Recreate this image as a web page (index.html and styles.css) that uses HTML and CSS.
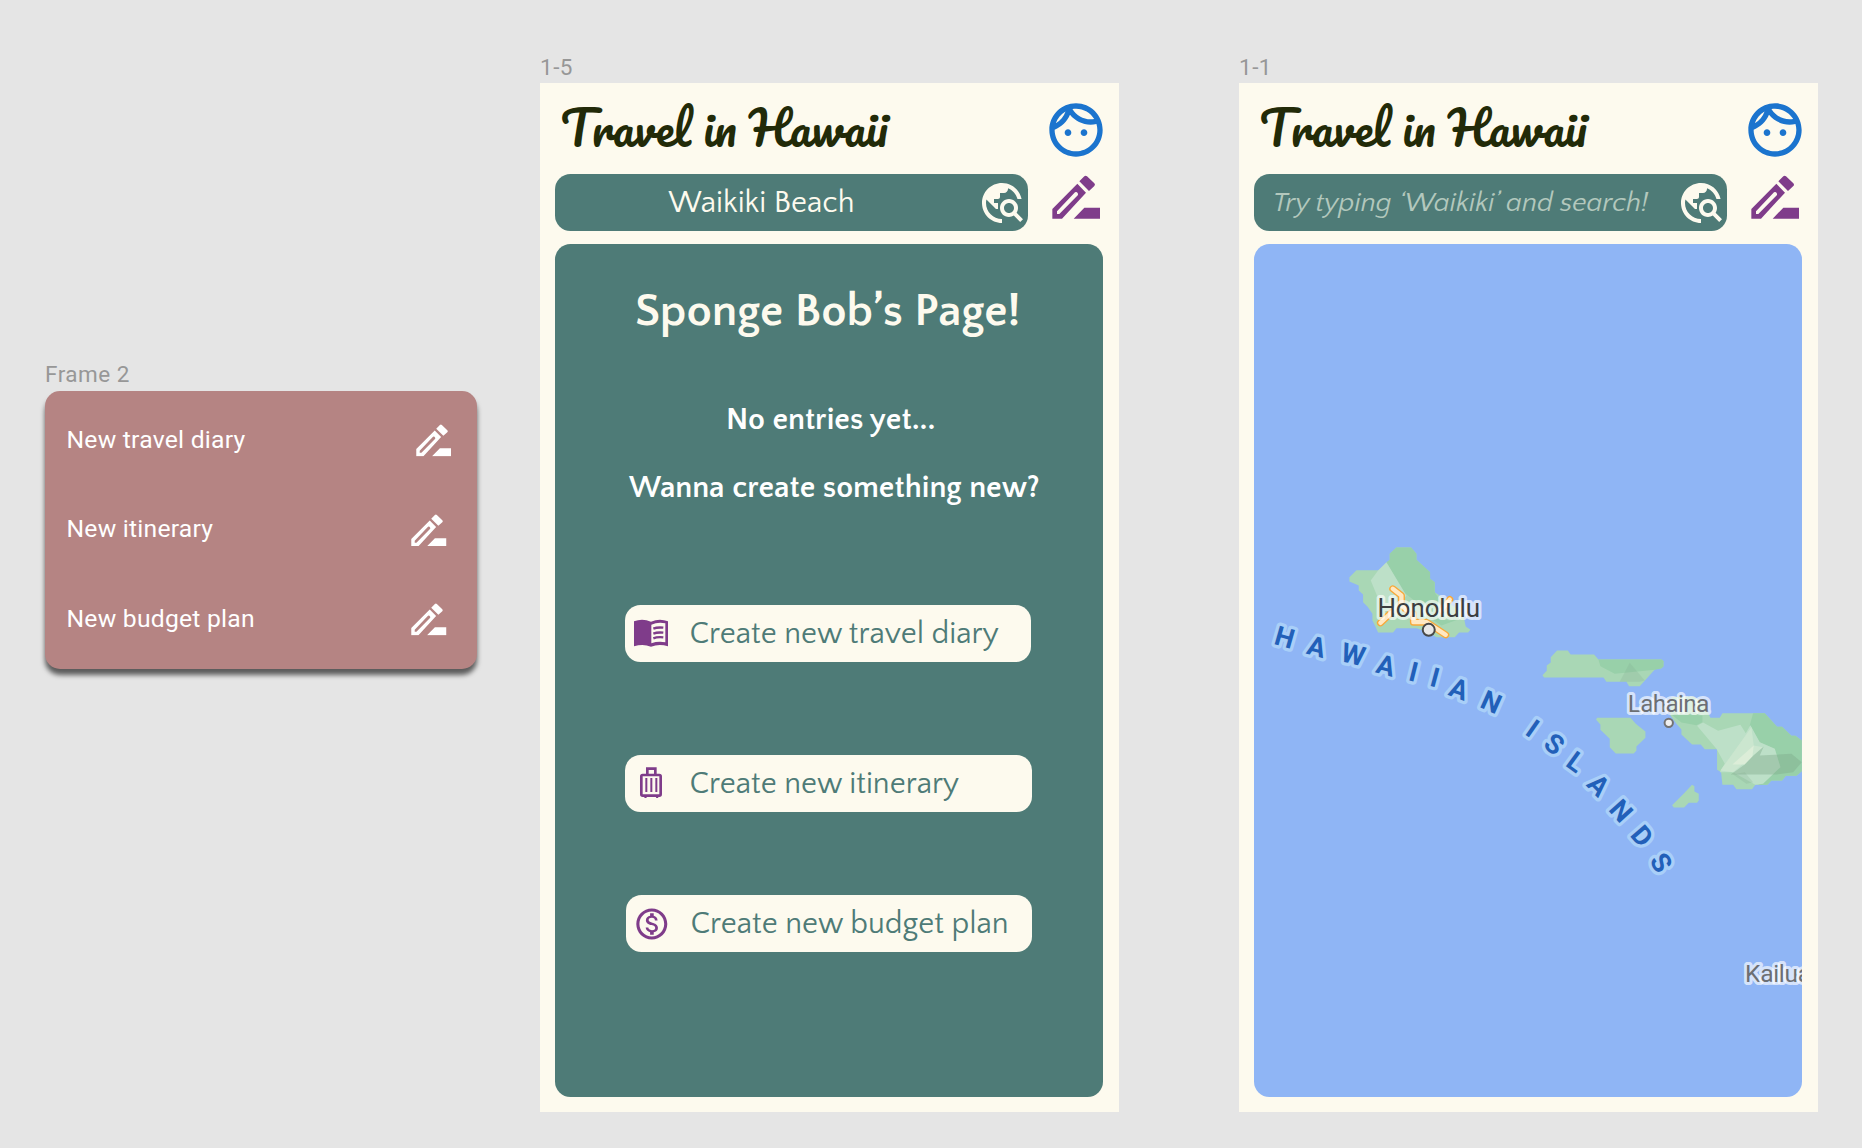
FILE: index.html
```html
<!DOCTYPE html>
<html lang="en">
<head>
<meta charset="utf-8">
<title>Travel in Hawaii</title>
<link rel="stylesheet" href="styles.css">
</head>
<body>
<svg class="defs" aria-hidden="true">
  <symbol id="pencil" viewBox="21 28 144 132">
    <path fill-rule="evenodd" d="M22 159V130L97 54L123 81L51 159ZM36 145H43L99 88Q100 84 96 80Q93 78 90 80L36 137Z"/>
    <path d="M103 47L118 32Q122 28 126 32L148 53Q152 57 148 61L132 76ZM86 159L118 126H165V159Z"/>
  </symbol>
  <symbol id="face" viewBox="0 0 24 24">
    <path d="M10.25 13c0 .69-.56 1.25-1.25 1.25S7.75 13.69 7.75 13s.56-1.25 1.25-1.25 1.25.56 1.25 1.25zM15 11.75c-.69 0-1.25.56-1.25 1.25s.56 1.25 1.25 1.25 1.25-.56 1.25-1.25-.56-1.25-1.25-1.25zM22 12c0 5.52-4.48 10-10 10S2 17.52 2 12 6.48 2 12 2s10 4.48 10 10zM10.66 4.12C12.06 6.44 14.6 8 17.5 8c.46 0 .91-.05 1.34-.12C17.44 5.56 14.9 4 12 4c-.46 0-.91.05-1.34.12zM4.42 9.47c1.71-.97 3.03-2.55 3.66-4.44C6.37 6 5.05 7.58 4.42 9.47zM20 12c0-.78-.12-1.53-.33-2.24-.7.15-1.42.24-2.17.24-3.13 0-5.92-1.44-7.76-3.69C8.69 8.87 6.6 10.88 4 11.86c.01.04 0 .09 0 .14 0 4.41 3.59 8 8 8s8-3.59 8-8z"/>
  </symbol>
  <symbol id="explore" viewBox="0 0 24 24">
    <path d="M19.3 16.9c.4-.7.7-1.5.7-2.4 0-2.5-2-4.5-4.5-4.5S11 12 11 14.5s2 4.5 4.500 4.500c.9 0 1.700-.3 2.400-.7l3.200 3.200 1.400-1.400-3.200-3.200zM15.500 17c-1.400 0-2.500-1.100-2.500-2.500s1.100-2.500 2.500-2.500 2.500 1.100 2.500 2.500-1.100 2.500-2.500 2.500zM12 20v2C6.480 22 2 17.520 2 12S6.480 2 12 2c4.840 0 8.870 3.440 9.800 8h-2.070c-.64-2.460-2.400-4.470-4.730-5.410V5c0 1.100-.9 2-2 2h-2v2c0 .55-.45 1-1 1H8v2h2v3H9l-4.790-4.790C4.080 10.790 4 11.380 4 12c0 4.410 3.590 8 8 8z"/>
  </symbol>
</svg>
<main class="canvas">
  <section class="frame frame-menu">
    <h2 class="frame-label">Frame 2</h2>
    <ul class="menu">
      <li class="menu-item first"><span>New travel diary</span><svg class="menu-icon"><use href="#pencil"/></svg></li>
      <li class="menu-item"><span>New itinerary</span><svg class="menu-icon"><use href="#pencil"/></svg></li>
      <li class="menu-item"><span>New budget plan</span><svg class="menu-icon"><use href="#pencil"/></svg></li>
    </ul>
  </section>

  <section class="frame frame-profile">
    <h2 class="frame-label">1-5</h2>
    <div class="phone">
      <header class="top"><h1 class="brand">Travel in Hawaii</h1><svg class="face"><use href="#face"/></svg></header>
      <div class="search-row">
        <div class="search"><span class="query">Waikiki Beach</span><svg class="explore"><use href="#explore"/></svg></div>
        <svg class="edit"><use href="#pencil"/></svg>
      </div>
      <div class="panel">
        <h3 class="page-title">Sponge Bob’s Page!</h3>
        <p class="note note-empty">No entries yet...</p>
        <p class="note note-ask">Wanna create something new?</p>
        <button class="create create-diary">
          <svg class="create-icon" viewBox="625 605 40 56">
            <g transform="translate(625 605) scale(.3333)">
              <path fill-rule="evenodd" d="M27 46Q52 36 78 47Q104 36 129 46V121Q103 112 78 122Q54 112 27 121ZM79 56V112Q99 105 121 109V52Q99 47 79 56Z"/>
              <path class="book-lines" d="M85 68Q97 63 115 65M85 83Q97 78 115 80M85 97Q97 92 115 94"/>
            </g>
          </svg>
          <span>Create new travel diary</span>
        </button>
        <button class="create create-itinerary">
          <svg class="create-icon" viewBox="625 755 40 56">
            <g transform="translate(625 755) scale(.3333)">
              <rect class="case" x="49" y="57" width="58" height="62" rx="4"/>
              <path class="case" d="M67 57V38H91V57"/>
              <path class="case ribs" d="M64 66V108M79 66V108M94 66V108"/>
              <path d="M56 120H67L64 126H59ZM91 120H102L99 126H94Z"/>
            </g>
          </svg>
          <span>Create new itinerary</span>
        </button>
        <button class="create create-budget">
          <svg class="create-icon" viewBox="0 0 40 56">
            <path transform="translate(7.2 9.4) scale(1.55)" d="M12 2C6.480 2 2 6.480 2 12s4.480 10 10 10 10-4.480 10-10S17.520 2 12 2zm0 18c-4.410 0-8-3.590-8-8s3.590-8 8-8 8 3.590 8 8-3.590 8-8 8zm.31-8.860c-1.770-.45-2.340-.94-2.340-1.670 0-.84.79-1.430 2.100-1.430 1.380 0 1.900.66 1.940 1.640h1.710c-.05-1.340-.87-2.570-2.490-2.970V5H10.900v1.690c-1.510.32-2.720 1.300-2.720 2.810 0 1.790 1.490 2.690 3.660 3.210 1.950.46 2.340 1.150 2.340 1.870 0 .53-.39 1.390-2.100 1.390-1.600 0-2.230-.72-2.320-1.640H8.040c.1 1.700 1.360 2.660 2.860 2.970V19h2.340v-1.670c1.520-.29 2.720-1.160 2.730-2.770-.01-2.200-1.900-2.960-3.660-3.420z"/>
          </svg>
          <span>Create new budget plan</span>
        </button>
      </div>
    </div>
  </section>

  <section class="frame frame-map">
    <h2 class="frame-label">1-1</h2>
    <div class="phone">
      <header class="top"><h1 class="brand">Travel in Hawaii</h1><svg class="face"><use href="#face"/></svg></header>
      <div class="search-row">
        <div class="search"><span class="hint">Try typing ‘Waikiki’ and search!</span><svg class="explore"><use href="#explore"/></svg></div>
        <svg class="edit"><use href="#pencil"/></svg>
      </div>
      <svg class="map" viewBox="1254.500 243.500 547.500 853">
        <g transform="translate(1250 530) scale(.33333)">
          <path class="land" d="M440 51H484L500 70V88L541 125V145L555 155V185L570 195L640 250L648 288L662 298L655 306H628L615 320H560L535 305L500 293H440L430 306H385L378 290L368 270V250L353 228L340 215V192L327 180V165L299 153V140L320 119H388L420 88V70Z"/>
          <path class="forest" d="M440 51H484L500 70V88L541 125V145L555 155V185L590 240L520 230L462 185L410 95L420 88V70Z"/>
          <path class="upland" d="M410 95L470 195L440 240L390 215L363 150L385 120Z"/>
          <path class="forest" d="M540 262L600 270L640 262L575 285Z"/>
          <path class="road-edge" d="M429 175L455 195V225L470 238M392 277L425 246M491 250V275H530L588 313M575 240L600 207"/>
          <path class="road" d="M429 175L455 195V225L470 238M392 277L425 246M491 250V275H530L588 313M575 240L600 207"/>
          <text class="town town-major" x="383" y="259" textLength="308">Honolulu</text>
          <circle class="town-dot" cx="537" cy="298" r="18"/>
          <g class="sea-name">
            <text transform="translate(105 320) rotate(16)" y="29">H</text>
            <text transform="translate(201 348) rotate(15)" y="29">A</text>
            <text transform="translate(311 371) rotate(14)" y="29">W</text>
            <text transform="translate(409 404) rotate(15)" y="29">A</text>
            <text transform="translate(492 423) rotate(14)" y="29">I</text>
            <text transform="translate(556 440) rotate(15)" y="29">I</text>
            <text transform="translate(628 475) rotate(20)" y="29">A</text>
            <text transform="translate(725 514) rotate(24)" y="29">N</text>
          </g>
        </g>
        <g transform="translate(1500 630) scale(.33333)">
          <path class="land" d="M172 60H204L213 72H283L296 87H486L491 92V108L484 114H468L420 167H388L380 154H320L311 141H133L128 134L141 121V105L153 96V80Z"/>
          <path class="forest" d="M296 87H486L491 92V108L484 114L466 118L345 130L302 107Z"/>
          <path class="ridge" d="M390 97L435 150L420 154H360Z"/>
          <path class="land" d="M292 262H392L408 280L437 303V322L410 348V360L402 369H348L330 350V325L302 298V282L289 268Z"/>
          <path class="land" d="M577 463L584 467V483L597 490V510L592 517H567L553 531H522L517 524L553 488Z"/>
          <path class="land" d="M515 200L580 198L610 215L632 262H660L668 248H795L832 289H847L875 316H887L906 330V422L890 436H858L847 450H815L803 463H767L757 476H710L700 463H668L664 425L652 418V356H615L603 342H577L545 312V297L530 280L512 255Z"/>
          <path class="forest" d="M512 250L608 255V275L590 284L545 276ZM760 248H795L832 289H847L875 316H887L906 330V422L890 436H858L847 450H815L803 463H775L842 410L825 355L780 335L750 285Z"/>
          <path class="upland" d="M592 286L610 276L655 301L722 283L738 308L752 284L780 335L825 355L842 410L790 460L767 463L700 425H660L675 400L650 355Z"/>
          <path class="peak" d="M755 290L762 345L790 350L700 425L662 420Z"/>
          <path class="summit" d="M762 345L758 378L735 402H698Z"/>
          <path class="ridge rock" d="M792 348L780 375L875 370L906 395L880 425L830 432H693L735 402L758 378Z"/>
          <path class="ridge" d="M735 425L760 455L740 460L700 432Z"/>
          <text class="town" x="384" y="244" textLength="245">Lahaina</text>
          <circle class="town-dot minor" cx="507" cy="277" r="12.500"/>
          <g class="sea-name">
            <text transform="translate(99 293) rotate(35)" y="29">I</text>
            <text transform="translate(164 340) rotate(37)" y="29">S</text>
            <text transform="translate(229 394) rotate(36)" y="29">L</text>
            <text transform="translate(297 464) rotate(46)" y="29">A</text>
            <text transform="translate(365 540) rotate(48)" y="29">N</text>
          </g>
        </g>
        <g transform="translate(1480 700) scale(.33333)">
          <g class="sea-name">
            <text transform="translate(488 406) rotate(49)" y="29">D</text>
            <text transform="translate(545 486) rotate(58)" y="29">S</text>
          </g>
          <text class="town" x="796" y="844" textLength="198">Kailua</text>
        </g>
      </svg>
    </div>
  </section>
</main>
</body>
</html>
```
FILE: styles.css
```css
* { box-sizing: border-box; margin: 0; padding: 0; }

body {
  background: #e5e5e5;
  width: 1862px;
  height: 1148px;
  overflow: hidden;
  font-family: "Quattrocento Sans", Lato, sans-serif;
}

.defs { display: none; }

.canvas { display: flex; align-items: flex-start; padding-left: 45px; }

.frame-label {
  font: 400 22.5px/32px Roboto, sans-serif;
  letter-spacing: .5px;
  color: #979797;
  height: 32px;
  white-space: nowrap;
}

/* Pop-up menu frame */
.frame-menu { width: 432px; margin-top: 358px; }
.menu {
  list-style: none;
  height: 278px;
  margin-top: .5px;
  padding: 4px 30.500px 0 21.500px;
  border-radius: 15px;
  background: #b58483;
  box-shadow: 0 6px 5px rgba(0, 0, 0, .6);
}
.menu-item {
  display: flex;
  justify-content: space-between;
  align-items: center;
  height: 89.500px;
  color: #fff;
  font: 400 24.700px/30px Roboto, sans-serif;
  letter-spacing: .23px;
}
.menu-item.first { margin-right: -4.500px; }
.menu-item span { margin-top: .5px; }
.menu-icon { width: 35.500px; height: 32.500px; fill: #fff; margin-top: 2px; }

/* Phone frames */
.frame-profile { margin: 51px 0 0 63px; }
.frame-map { margin: 51px 0 0 120.500px; }
.phone {
  width: 578.500px;
  height: 1029px;
  padding: 0 15px;
  background: #fdfaee;
}
.top { display: flex; justify-content: space-between; height: 91px; padding: 0 .5px 0 5.500px; }
.brand {
  font: 400 46.300px/90px Pacifico, cursive;
  color: #222a08;
  white-space: nowrap;
}
.face { width: 64px; height: 64px; margin: 15px -5px 0 0; fill: #1b74ce; }

.search-row { display: flex; height: 57px; gap: 24.500px; }
.search {
  display: flex;
  justify-content: space-between;
  width: 472.500px;
  height: 57px;
  padding: 0 1.500px 0 19px;
  border-radius: 15.500px;
  background: #4e7b77;
}
.query { margin-left: 94.500px; font-size: 30.860px; line-height: 58px; color: #fdfaee; white-space: nowrap; }
.hint { font-size: 27.770px; font-style: italic; line-height: 58px; color: #b3c8bd; white-space: nowrap; }
.explore { width: 48px; height: 48px; margin-top: 4.500px; fill: #fdfaee; }
.edit { width: 48px; height: 44px; margin-top: 1px; fill: #7f3c8a; }

.panel, .map { width: 548px; height: 853px; margin-top: 12.500px; border-radius: 15.500px; }
.panel { padding: 39.500px 0 0 70px; background: #4e7b77; white-space: nowrap; }
.page-title { margin-left: 10px; font-size: 46.300px; font-weight: 700; line-height: 58px; color: #fdfaee; }
.note { font-size: 30.860px; font-weight: 700; line-height: 40px; color: #fff; }
.note-empty { margin: 59px 0 0 101px; }
.note-ask { margin: 28px 0 0 4px; }

.create {
  display: flex;
  align-items: center;
  width: 406px;
  height: 57px;
  border: 0;
  border-radius: 15.500px;
  background: #fdfaee;
  color: #4e7b77;
  font: 400 30.860px/52px "Quattrocento Sans", Lato, sans-serif;
  white-space: nowrap;
}
.create-diary { margin-top: 97px; }
.create-itinerary { width: 407px; margin-top: 93px; }
.create-budget { margin: 83px 0 0 1px; }
.create-icon { width: 40px; height: 56px; margin-right: 24.500px; overflow: visible; fill: #7f3c8a; }
.book-lines { fill: none; stroke: #7f3c8a; stroke-width: 7; }
.case { fill: none; stroke: #7f3c8a; stroke-width: 8; }
.case.ribs { stroke-width: 6; }

/* Map */
.map { display: block; background: #8fb5f5; }
.land { fill: #a9d7b5; }
.forest { fill: #98d0a9; }
.upland { fill: #bde0c8; }
.peak { fill: #cbe6cf; }
.summit { fill: #dcedd8; }
.ridge { fill: #7fa98b; fill-opacity: .22; }
.rock { fill-opacity: .42; }
.road-edge, .road { fill: none; stroke-linecap: round; stroke-linejoin: round; }
.road-edge { stroke: #f9a838; stroke-width: 21; }
.road { stroke: #ffe8c2; stroke-width: 13; }
.town {
  font: 400 74px Roboto, sans-serif;
  fill: #6c6f73;
  stroke: rgba(255, 255, 255, .65);
  stroke-width: 18;
  stroke-linejoin: round;
  paint-order: stroke;
}
.town-major { font-size: 78px; fill: #3c3e40; }
.town-dot { fill: #e8e8e8; stroke: #484848; stroke-width: 6; }
.town-dot.minor { stroke: #737373; fill: #f0f0f0; }
.sea-name text {
  font: 700 81px Roboto, sans-serif;
  text-anchor: middle;
  fill: #2260b9;
  stroke: #a9cff8;
  stroke-width: 20;
  stroke-linejoin: round;
  paint-order: stroke;
}
```
